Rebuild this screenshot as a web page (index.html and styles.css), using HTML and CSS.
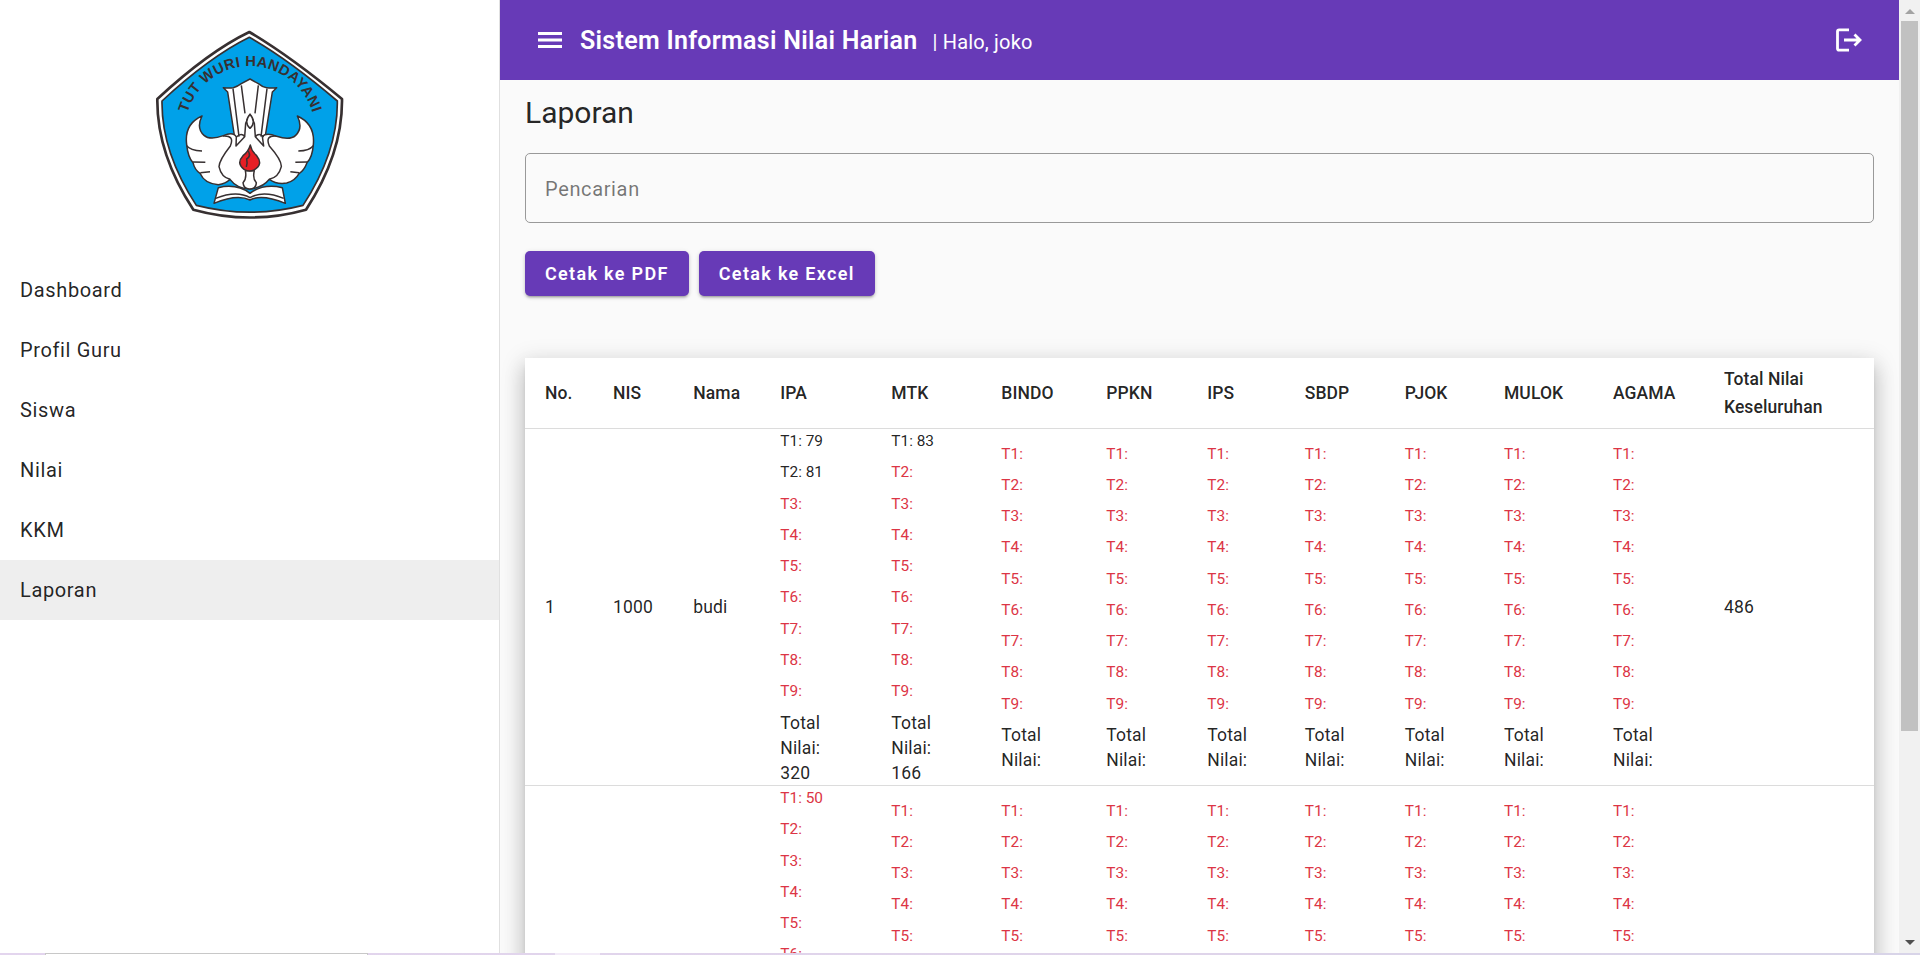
FILE: index.html
```html
<!DOCTYPE html>
<html lang="id">
<head>
<meta charset="utf-8">
<title>Sistem Informasi Nilai Harian</title>
<link rel="stylesheet" href="styles.css">
</head>
<body>
<div class="window">
  <div class="app">
    <aside class="sidebar">
      <svg class="logo" viewBox="0 0 660 630" role="img" aria-label="Tut Wuri Handayani">
        <defs><path id="arc" d="M142 279A196 196 0 0 1 518 279"/></defs>
        <path class="rim" d="M328 36Q450 108 606 237Q608 400 498 569Q330 616 160 569Q50 400 52 237Q205 95 328 36Z"/>
        <path class="field" d="M328 52Q445 118 592 243Q594 395 489 556Q330 597 169 556Q64 395 66 243Q210 110 328 52Z"/>
        <text class="motto"><textPath href="#arc" textLength="502">TUT WURI HANDAYANI</textPath></text>
        <g class="ink">
          <path d="M288 378L263 216L250 203Q268 205 280 203Q292 200 304 191L330 177L355 191Q368 202 380 203Q395 205 410 203L397 216L371 378Z"/>
          <path d="M279 206L297 350M304 196L315 280M355 196L345 280M381 206L363 350" fill="none"/>
          <path d="M186 288Q132 312 140 374Q144 413 159 428Q164 450 181 461Q193 490 235 494Q257 492 270 478Q290 505 328 507Q366 505 388 478Q410 494 440 489Q465 483 477 461Q493 450 501 428Q517 413 520 374Q526 312 472 288Q490 324 467 346Q450 362 410 349Q380 337 367 349L371 378L346 350L343 310L330 283L317 310L314 350L288 378L289 351Q280 334 250 347Q210 362 192 346Q168 324 186 288Z"/>
          <path d="M248 348Q285 345 271 378Q238 420 237 440Q244 472 270 478M409 348Q374 345 388 378Q425 420 424 440Q416 472 388 478M140 377Q150 392 186 393M159 426L196 427M181 458L210 455M520 377Q508 392 475 393M501 426L466 427M477 458L451 455M289 351Q305 337 314 350M346 350Q357 337 371 351" fill="none"/>
          <path d="M330 283Q310 307 330 325Q350 307 330 283Z"/>
          <path d="M235 503Q290 490 330 520Q370 490 427 503L436 550Q365 521 330 540Q292 521 222 550Z"/>
          <path d="M227 535Q290 510 330 533Q370 510 431 535" fill="none"/>
          <path d="M316 452H343Q337 475 349 488Q348 507 328 507Q311 507 309 488Q321 476 316 452Z"/>
          <path class="flame" d="M331 375Q334 393 350 407Q371 433 342 450Q328 457 312 448Q288 430 309 407Q325 395 331 375Z"/>
          <path d="M325 393Q334 409 320 417Q323 429 319 441" fill="none"/>
        </g>
      </svg>
      <nav class="menu">
        <a class="menu-item">Dashboard</a>
        <a class="menu-item">Profil Guru</a>
        <a class="menu-item">Siswa</a>
        <a class="menu-item">Nilai</a>
        <a class="menu-item">KKM</a>
        <a class="menu-item active">Laporan</a>
      </nav>
    </aside>
    <main class="main">
      <header class="topbar">
        <svg class="icon-menu" viewBox="0 0 24 16"><path d="M0 1.5h24M0 8h24M0 14.5h24"/></svg>
        <span class="app-title">Sistem Informasi Nilai Harian</span>
        <span class="greeting">| Halo, joko</span>
        <svg class="icon-logout" viewBox="0 0 26 24"><path d="M13 1.8H3.2Q1.5 1.8 1.5 3.5V20.5Q1.5 22.2 3.2 22.2H13M8 12H24M18.5 6.5L24 12L18.5 17.5"/></svg>
      </header>
      <div class="content">
        <h1 class="page-title">Laporan</h1>
        <input class="search" type="text" placeholder="Pencarian">
        <div class="actions">
          <button class="btn">Cetak ke PDF</button>
          <button class="btn">Cetak ke Excel</button>
        </div>
        <table class="report">
          <colgroup id="cols"></colgroup>
          <thead><tr id="head"></tr></thead>
          <tbody id="rows"></tbody>
        </table>
      </div>
    </main>
    <div class="scrollbar">
      <svg class="arrow arrow-up" viewBox="0 0 10 5"><path d="M0 5L5 0L10 5Z"/></svg>
      <div class="thumb"></div>
      <svg class="arrow arrow-down" viewBox="0 0 10 5"><path d="M0 0L5 5L10 0Z"/></svg>
    </div>
  </div>
  <footer class="strip"><span class="strip-tab"></span><span class="strip-light"></span></footer>
</div>
<script src="report.js"></script>
</body>
</html>
```
FILE: styles.css
```css
* { box-sizing: border-box; }
body { margin: 0; font-family: Roboto, "Liberation Sans", sans-serif; color: rgba(0, 0, 0, .87); overflow: hidden; }
.window { display: flex; flex-direction: column; height: 955px; }
.app { display: flex; height: 953px; overflow: hidden; }

.sidebar { width: 500px; flex: none; background: #fff; border-right: 1px solid #e0e0e0; display: flex; flex-direction: column; }
.logo { width: 220px; height: 210px; margin: 20px 0 0 140px; flex: none; display: block; }
.rim { fill: #fff; stroke: #373031; stroke-width: 8; stroke-linejoin: round; }
.field { fill: #00a1e9; stroke: #373031; stroke-width: 5; }
.motto { font: bold 44px "Liberation Sans", sans-serif; fill: #373031; }
.ink { fill: #fff; stroke: #373031; stroke-width: 4.5; stroke-linejoin: round; }
.ink .flame { fill: #e61f25; }
.menu { margin-top: 30px; }
.menu-item { display: flex; align-items: center; height: 60px; padding: 0 20px; font-size: 20px; letter-spacing: .64px; }
.menu-item.active { background: #eee; }

.main { flex: 1; min-width: 0; background: #fafafa; overflow: hidden; }
.topbar { display: flex; align-items: center; height: 80px; padding: 0 37px 0 38px; background: #673ab7; color: #fff; }
.icon-menu { width: 24px; height: 16px; fill: none; stroke: #fff; stroke-width: 3; }
.app-title { margin-left: 18px; font-size: 25px; font-weight: 600; letter-spacing: .29px; }
.greeting { margin-left: 15px; padding-top: 4px; font-size: 20px; letter-spacing: .18px; }
.icon-logout { width: 26px; height: 24px; margin-left: auto; fill: none; stroke: #fff; stroke-width: 2.8; }

.content { padding: 13px 25px 0; }
.page-title { margin: 0; font-size: 30px; font-weight: 400; line-height: 40px; }
.search { display: block; width: 100%; height: 70px; margin-top: 20px; padding: 2px 19px 0; border: 1px solid #999; border-radius: 5px; background: transparent; font: 20px Roboto, sans-serif; letter-spacing: .64px; }
.search::placeholder { color: rgba(0, 0, 0, .54); }
.actions { display: flex; gap: 10px; margin-top: 28px; }
.btn { height: 45px; padding: 0 20px; border: 0; border-radius: 5px; background: #673ab7; color: #fff; font: 600 18px Roboto, sans-serif; letter-spacing: 1.33px; box-shadow: 0 3px 2px -2px rgba(0,0,0,.2), 0 2px 3px rgba(0,0,0,.14), 0 1px 5px rgba(0,0,0,.12); }

.report { width: 1349px; margin-top: 62px; table-layout: fixed; border-collapse: separate; border-spacing: 0; background: #fff; font-size: 17.5px; line-height: 25px; letter-spacing: .16px; box-shadow: 0 6px 6px -3px rgba(0,0,0,.2), 0 12px 20px 1px rgba(0,0,0,.14), 0 5px 22px 3px rgba(0,0,0,.12); }
.report th, .report td { padding: 0 20px; text-align: left; vertical-align: middle; border-bottom: 1px solid #dcdcdc; }
.report th { height: 71px; padding-top: 1px; font-weight: 500; line-height: 27.5px; letter-spacing: .08px; }
.report td { height: 357px; }
.task { height: 31.25px; font-size: 15.4px; line-height: 24.4px; letter-spacing: 0; }
.low { color: #dc3545; }
.sum { height: 74.5px; padding-top: .5px; }
.sum.blank { height: 49.5px; }

.scrollbar { width: 21px; flex: none; background: #f1f1f1; display: flex; flex-direction: column; align-items: center; }
.arrow { width: 10px; height: 5px; flex: none; }
.arrow-up { margin-top: 9px; fill: #a3a3a3; }
.arrow-down { margin: auto 0 8px; fill: #505050; }
.thumb { width: 17px; height: 710px; margin-top: 7px; background: #c1c1c1; flex: none; }

.strip { display: flex; height: 2px; background: linear-gradient(90deg, #e3d5ee, #dfd4ea 60%, #d8d4e8); }
.strip-tab { width: 323px; margin-left: 45px; background: #fff; border: 1px solid #c8c8c8; border-bottom: 0; }
.strip-light { width: 45px; margin-left: 187px; background: #f3ecf8; }
```
FILE: report.js
```js
const columns = [
  ["No.", 68], ["NIS", 80.3], ["Nama", 87], ["IPA", 111], ["MTK", 110], ["BINDO", 105], ["PPKN", 101],
  ["IPS", 97.5], ["SBDP", 100], ["PJOK", 99.2], ["MULOK", 109], ["AGAMA", 111], ["Total Nilai Keseluruhan", 170]
];
const minimum = 75;
const empty = { scores: [], total: "" };
const others = Array(7).fill(empty);
const students = [
  { lead: ["1", "1000", "budi"], subjects: [{ scores: [79, 81], total: 320 }, { scores: [83], total: 166 }, ...others], total: "486" },
  { lead: ["", "", ""], subjects: [{ scores: [50], total: 100 }, empty, ...others], total: "" }
];

function subjectCell(subject) {
  let html = "";
  for (let i = 0; i < 9; i++) {
    const score = subject.scores[i];
    html += `<div class="task${score >= minimum ? "" : " low"}">T${i + 1}: ${score ?? ""}</div>`;
  }
  return `<td>${html}<div class="sum${subject.total ? "" : " blank"}">Total Nilai: ${subject.total}</div></td>`;
}

document.getElementById("cols").innerHTML = columns.map(c => `<col style="width:${c[1]}px">`).join("");
document.getElementById("head").innerHTML = columns.map(c => `<th>${c[0]}</th>`).join("");
document.getElementById("rows").innerHTML = students.map(s =>
  `<tr>${s.lead.map(v => `<td>${v}</td>`).join("")}${s.subjects.map(subjectCell).join("")}<td>${s.total}</td></tr>`
).join("");
```
